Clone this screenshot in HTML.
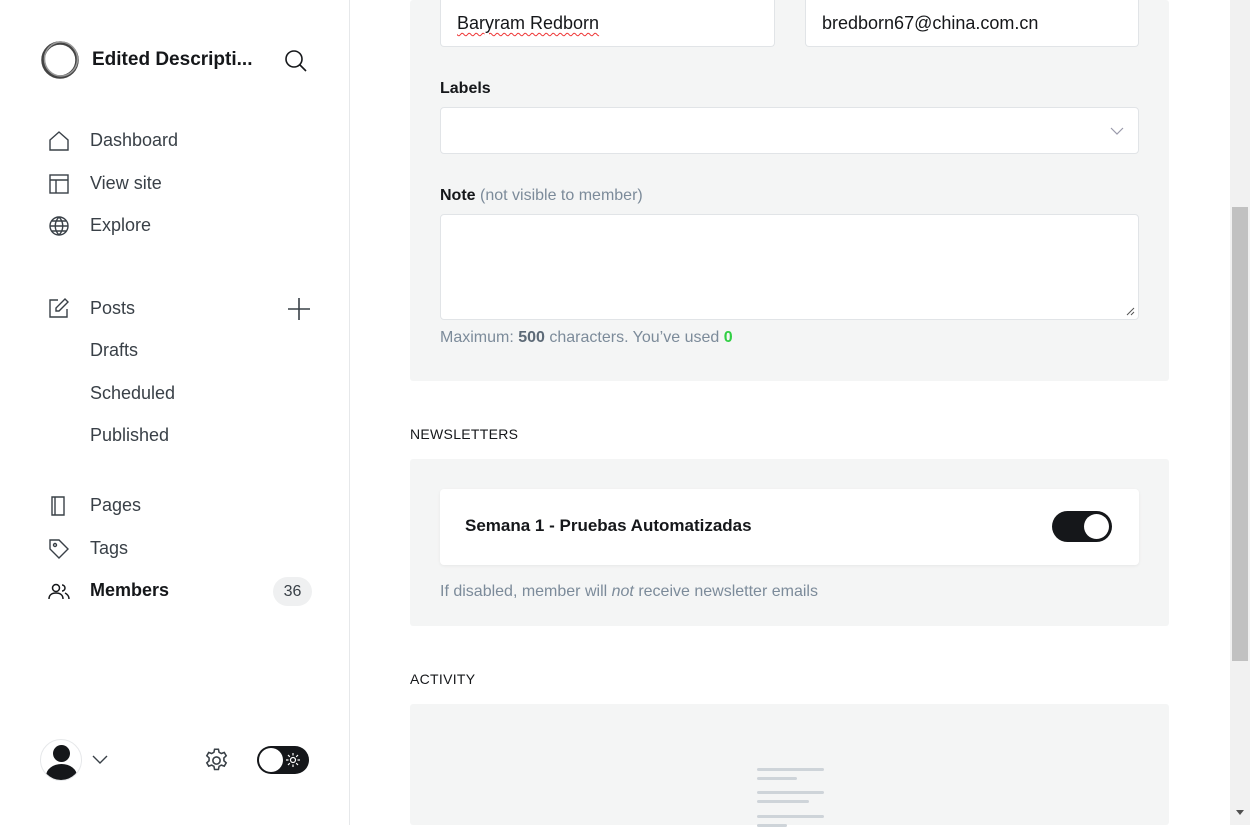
<!DOCTYPE html>
<html><head><style>
*{box-sizing:border-box;margin:0;padding:0}
body{width:1250px;height:825px;overflow:hidden;font-family:"Liberation Sans",sans-serif;background:#fff;position:relative;color:#15171a}
.side{position:absolute;left:0;top:0;width:350px;height:825px;border-right:1px solid #e6e8ea}
.nav{position:absolute;left:90px;font-size:18px;color:#394047}
.ic{position:absolute;left:48px}
.main{position:absolute;left:410px;width:759px}
.grey{background:#f4f5f5;border-radius:3px}
.box{position:absolute;background:#fff;border:1px solid #e1e4e7;border-radius:4px}
.lbl{position:absolute;font-size:16px;font-weight:bold;color:#15171a}
.h{position:absolute;font-size:14px;letter-spacing:.3px;color:#15171a}
.sb{position:absolute;left:1230px;top:0;width:20px;height:825px;background:#f1f1f1}
.bar{position:absolute;left:757px;height:3px;background:#ced4d9;border-radius:2px}
</style></head><body>
<div class="side">
<svg style="position:absolute;left:40px;top:41px" width="40" height="38" viewBox="0 0 40 38"><ellipse cx="20" cy="19" rx="17" ry="17" fill="none" stroke="#444" stroke-width="3.5"/><ellipse cx="21" cy="18" rx="16.5" ry="17" fill="none" stroke="#999" stroke-width="1.5"/></svg>
<div style="position:absolute;left:92px;top:49px;font-size:19px;font-weight:bold">Edited Descripti...</div>
<svg style="position:absolute;left:284px;top:49px" width="24" height="24" viewBox="0 0 24 24" fill="none" stroke="#15171a" stroke-width="1.6"><circle cx="10" cy="10" r="8"/><path d="M16 16l6 6"/></svg>
<svg class="ic" style="top:130px" width="22" height="22" viewBox="0 0 22 22" fill="none" stroke="#394047" stroke-width="1.4"><path d="M2 10L11 2l9 8v10H2z"/></svg>
<div class="nav" style="top:130px">Dashboard</div>
<svg class="ic" style="top:173px" width="22" height="22" viewBox="0 0 22 22" fill="none" stroke="#394047" stroke-width="1.4"><rect x="2" y="2" width="18" height="18"/><path d="M2 7h18M8 7v13"/></svg>
<div class="nav" style="top:173px">View site</div>
<svg class="ic" style="top:215px" width="22" height="22" viewBox="0 0 22 22" fill="none" stroke="#394047" stroke-width="1.4"><circle cx="11" cy="11" r="9"/><path d="M2 11h18M11 2c-5 5-5 13 0 18M11 2c5 5 5 13 0 18M4 6h14M4 16h14"/></svg>
<div class="nav" style="top:215px">Explore</div>
<svg class="ic" style="top:297px" width="22" height="22" viewBox="0 0 22 22" fill="none" stroke="#394047" stroke-width="1.4"><path d="M10 3H2v17h17v-8M17 2l3 3-9 9H8v-3z"/></svg>
<div class="nav" style="top:298px">Posts</div>
<svg style="position:absolute;left:288px;top:298px" width="22" height="22" viewBox="0 0 22 22" stroke="#394047" stroke-width="1.6"><path d="M11 0v22M0 11h22"/></svg>
<div class="nav" style="top:340px">Drafts</div>
<div class="nav" style="top:383px">Scheduled</div>
<div class="nav" style="top:425px">Published</div>
<svg class="ic" style="top:495px" width="22" height="22" viewBox="0 0 22 22" fill="none" stroke="#394047" stroke-width="1.4"><path d="M4 2h12v18H4zM7 2v18"/></svg>
<div class="nav" style="top:495px">Pages</div>
<svg class="ic" style="top:538px" width="22" height="22" viewBox="0 0 22 22" fill="none" stroke="#394047" stroke-width="1.4"><path d="M2 2h9l9 9-9 9-9-9z"/><circle cx="7" cy="7" r="1.5"/></svg>
<div class="nav" style="top:538px">Tags</div>
<svg class="ic" style="top:581px" width="22" height="22" viewBox="0 0 22 22" fill="none" stroke="#15171a" stroke-width="1.5"><circle cx="8" cy="7" r="3.5"/><path d="M1 18c0-4 3-6 7-6s7 2 7 6M14 4a3 3 0 010 6M17 12c2 1 4 3 4 6"/></svg>
<div class="nav" style="top:580px;font-weight:bold;color:#15171a">Members</div>
<div style="position:absolute;left:273px;top:577px;width:39px;height:29px;border-radius:15px;background:#eff0f1;font-size:16px;color:#394047;text-align:center;line-height:29px">36</div>
<div style="position:absolute;left:40px;top:739px;width:42px;height:42px;border-radius:50%;border:1px solid #e6e8ea;overflow:hidden;background:#fff">
<div style="position:absolute;left:12px;top:5px;width:17px;height:17px;border-radius:50%;background:#15171a"></div>
<div style="position:absolute;left:5px;top:24px;width:31px;height:24px;border-radius:50%;background:#15171a"></div></div>
<svg style="position:absolute;left:92px;top:755px" width="16" height="10" viewBox="0 0 16 10" fill="none" stroke="#394047" stroke-width="1.4"><path d="M1 1l7 7 7-7"/></svg>
<svg style="position:absolute;left:203px;top:747px" width="27" height="27" viewBox="0 0 24 24" fill="none" stroke="#394047" stroke-width="1.4"><circle cx="12" cy="12" r="3.2"/><path d="M10.3 2h3.4l.6 2.7 2 1.1 2.6-.9 1.7 2.9-2 1.9v2.5l2 1.9-1.7 2.9-2.6-.9-2 1.1-.6 2.8h-3.4l-.6-2.8-2-1.1-2.6.9-1.7-2.9 2-1.9V9.7l-2-1.9 1.7-2.9 2.6.9 2-1.1z"/></svg>
<div style="position:absolute;left:257px;top:746px;width:52px;height:28px;border-radius:14px;background:#15171a"><div style="position:absolute;left:2px;top:2px;width:24px;height:24px;border-radius:50%;background:#fff"></div>
<svg style="position:absolute;left:29px;top:7px" width="14" height="14" viewBox="0 0 14 14" stroke="#fff" stroke-width="1.2" fill="none"><circle cx="7" cy="7" r="2.5"/><path d="M7 0v2.5M7 11.5V14M0 7h2.5M11.5 7H14M2 2l1.8 1.8M10.2 10.2L12 12M2 12l1.8-1.8M10.2 3.8L12 2"/></svg></div>
</div>
<div class="main grey" style="top:0;height:381px"></div>
<div class="box" style="left:440px;top:0;width:335px;height:47px;border-top:none;border-radius:0 0 4px 4px"><span style="position:absolute;left:16px;top:13px;font-size:18px;color:#15171a;text-decoration:underline wavy #e33;text-underline-offset:3px;text-decoration-thickness:1px">Baryram Redborn</span></div>
<div class="box" style="left:805px;top:0;width:334px;height:47px;border-top:none;border-radius:0 0 4px 4px"><span style="position:absolute;left:16px;top:13px;font-size:18px;color:#15171a">bredborn67@china.com.cn</span></div>
<div class="lbl" style="left:440px;top:80px">Labels</div>
<div class="box" style="left:440px;top:107px;width:699px;height:47px"><svg style="position:absolute;right:14px;top:19px" width="14" height="8" viewBox="0 0 14 8" fill="none" stroke="#99a" stroke-width="1.2"><path d="M1 1l6 6 6-6"/></svg></div>
<div class="lbl" style="left:440px;top:187px">Note <span style="font-weight:normal;color:#7c8b9a">(not visible to member)</span></div>
<div class="box" style="left:440px;top:214px;width:699px;height:106px"><svg style="position:absolute;right:3px;bottom:3px" width="9" height="9" stroke="#555"><path d="M1 8L8 1M5 8L8 5"/></svg></div>
<div style="position:absolute;left:440px;top:329px;font-size:16px;color:#7c8b9a">Maximum: <b style="color:#5d6a77">500</b> characters. You’ve used <b style="color:#30cf43">0</b></div>
<div class="h" style="left:410px;top:426px">NEWSLETTERS</div>
<div class="main grey" style="top:459px;height:167px"></div>
<div class="box" style="left:440px;top:489px;width:699px;height:76px;border:none;box-shadow:0 1px 3px rgba(0,0,0,.06)">
<div style="position:absolute;left:25px;top:27px;font-size:17px;font-weight:bold">Semana 1 - Pruebas Automatizadas</div>
<div style="position:absolute;left:612px;top:22px;width:60px;height:31px;border-radius:16px;background:#15171a"><div style="position:absolute;right:3px;top:3px;width:25px;height:25px;border-radius:50%;background:#fff"></div></div></div>
<div style="position:absolute;left:440px;top:583px;font-size:16px;color:#7c8b9a">If disabled, member will <i>not</i> receive newsletter emails</div>
<div class="h" style="left:410px;top:671px">ACTIVITY</div>
<div class="main grey" style="top:704px;height:121px"></div>
<div class="bar" style="top:768px;width:67px"></div><div class="bar" style="top:777px;width:40px"></div>
<div class="bar" style="top:791px;width:67px"></div><div class="bar" style="top:800px;width:52px"></div>
<div class="bar" style="top:815px;width:67px"></div><div class="bar" style="top:824px;width:30px"></div>
<div class="sb"><div style="position:absolute;left:2px;top:207px;width:16px;height:454px;background:#c1c1c1"></div>
<div style="position:absolute;left:6px;top:810px;border-left:4px solid transparent;border-right:4px solid transparent;border-top:5px solid #505050"></div></div>
</body></html>
